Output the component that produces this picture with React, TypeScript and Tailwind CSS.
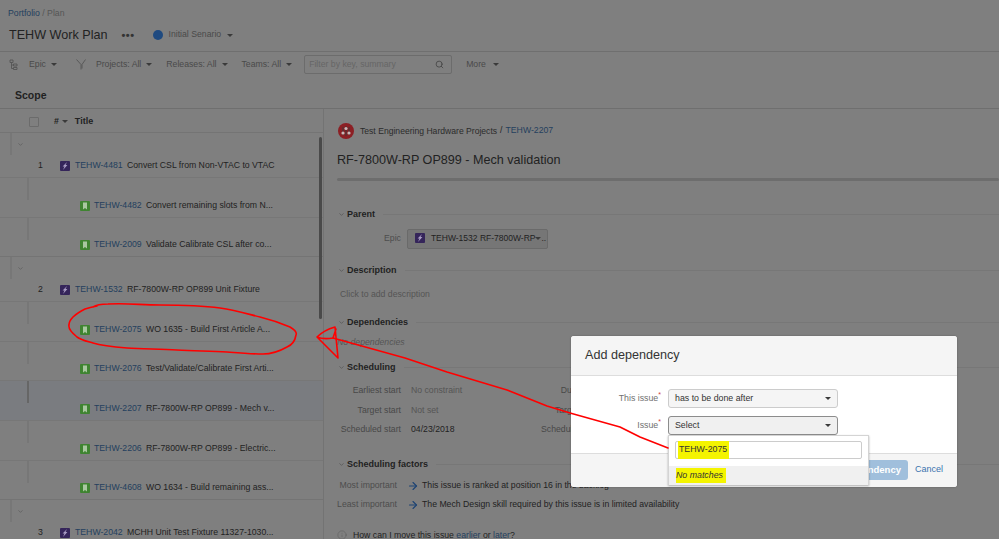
import { ArrowRight, ChevronDown, Info, Search } from 'lucide-react';

const font = { fontFamily: '"Liberation Sans", Arial, sans-serif' };

const topRows = [
  {
    num: 1,
    issueKey: 'TEHW-4481',
    title: 'Convert CSL from Non-VTAC to VTAC',
    children: [
      { issueKey: 'TEHW-4482', title: 'Convert remaining slots from N...' },
      { issueKey: 'TEHW-2009', title: 'Validate Calibrate CSL after co...' },
    ],
  },
  {
    num: 2,
    issueKey: 'TEHW-1532',
    title: 'RF-7800W-RP OP899 Unit Fixture',
    children: [
      { issueKey: 'TEHW-2075', title: 'WO 1635 - Build First Article A...' },
      { issueKey: 'TEHW-2076', title: 'Test/Validate/Calibrate First Arti...' },
      { issueKey: 'TEHW-2207', title: 'RF-7800W-RP OP899 - Mech v...', active: true },
      { issueKey: 'TEHW-2206', title: 'RF-7800W-RP OP899 - Electric...' },
      { issueKey: 'TEHW-4608', title: 'WO 1634 - Build remaining ass...' },
    ],
  },
  {
    num: 3,
    issueKey: 'TEHW-2042',
    title: 'MCHH Unit Test Fixture 11327-1030...',
    children: [],
  },
];

function Caret({ color = 'border-t-[#3a3a3a]' }: { color?: string }) {
  return <span className={`inline-block h-0 w-0 shrink-0 border-x-[3px] border-t-[3px] border-x-transparent ${color}`} />;
}

function EpicIcon() {
  return (
    <svg width="10" height="10" viewBox="0 0 10 10" className="mb-[1px] shrink-0">
      <rect width="10" height="10" rx="1" fill="#35255a" />
      <path d="M7 1 2.600 5.600h1.900L3 9l4.400-4.900H5.500z" fill="#a99cc4" />
    </svg>
  );
}

function StoryIcon() {
  return (
    <svg width="10" height="10" viewBox="0 0 10 10" className="mb-[1px] shrink-0">
      <rect width="10" height="10" rx="1" fill="#3f8431" />
      <path d="M3 1.500h4v7L5 7 3 8.500z" fill="#a9c7a0" />
    </svg>
  );
}

function TopRow({ num, issueKey, title }: { num: number; issueKey: string; title: string }) {
  return (
    <div className="relative flex h-[45px] items-end border-t border-[#747474] pb-[5px]">
      <div className="absolute left-[10px] top-0 h-[22px] w-[2px] bg-[#777777]" />
      <ChevronDown size={7} className="absolute left-[17px] top-[8px] text-[#555555]" />
      <span className="w-[60px] pl-[38px] text-[#222222]">{num}</span>
      <EpicIcon />
      <span className="ml-[5px] w-[52px] text-[#24405e]">{issueKey}</span>
      <span className="text-[#222222]">{title}</span>
    </div>
  );
}

function ChildRow({ issueKey, title, active }: { issueKey: string; title: string; active?: boolean }) {
  return (
    <div className={`relative flex h-[39.6px] items-end border-t border-[#777777] pb-[5px] pl-[80px] ${active ? 'bg-[#7a7c80]' : ''}`}>
      <div className={`absolute left-[27px] top-0 h-[22px] w-[2px] ${active ? 'bg-[#666666]' : 'bg-[#777777]'}`} />
      <StoryIcon />
      <span className="ml-[4px] w-[52px] text-[#24405e]">{issueKey}</span>
      <span className="text-[#222222]">{title}</span>
    </div>
  );
}

function SectionTitle({ label, className }: { label: string; className: string }) {
  return (
    <div className={`flex items-center gap-[2px] ${className}`}>
      <ChevronDown size={7} className="ml-[1px] text-[#4a4a4a]" />
      <span className="text-[9px] font-bold text-[#1f1f1f]">{label}</span>
      <div className="ml-[6px] h-px flex-1 bg-[#777777]" />
    </div>
  );
}

function DetailRow({ label, value, dark, label2 }: { label: string; value: string; dark?: boolean; label2: string }) {
  return (
    <div className="flex h-[19.5px] items-center">
      <span className="w-[64px] whitespace-nowrap text-right text-[#484848]">{label}</span>
      <span className={`ml-[10px] w-[130px] ${dark ? 'text-[#1f1f1f]' : 'text-[#555555]'}`}>{value}</span>
      <span className="w-[55px] whitespace-nowrap text-right text-[#484848]">{label2}</span>
    </div>
  );
}

function Factor({ label, text }: { label: string; text: string }) {
  return (
    <div className="flex h-[19px] items-center">
      <span className="w-[60px] whitespace-nowrap text-right text-[#4d4d4d]">{label}</span>
      <ArrowRight size={12} className="ml-[10px] text-[#1d4474]" strokeWidth={2.2} />
      <span className="ml-[3px] text-[#222222]">{text}</span>
    </div>
  );
}

function Dialog() {
  return (
    <div className="absolute left-[571px] top-[336px] flex h-[151px] w-[386px] flex-col rounded-[3px] bg-white text-[8.8px] shadow-[0_0_2px_rgba(0,0,0,0.3)]">
      <div className="flex h-[40px] items-center rounded-t-[3px] border-b border-[#dddddd] bg-[#f5f5f5] pl-[14px] text-[12.6px] text-[#333333]">
        Add dependency
      </div>
      <div className="flex flex-1 flex-col gap-[8px] pt-[13px]">
        <div className="flex items-center">
          <span className="w-[90px] text-right text-[#707070]">
            This issue<sup className="text-[7px] text-[#d04437]">*</sup>
          </span>
          <div className="ml-[7px] flex h-[19px] w-[170px] items-center justify-between rounded-[3px] border border-[#cccccc] bg-[#f5f5f5] px-[6px] text-[#333333]">
            has to be done after
            <Caret />
          </div>
        </div>
        <div className="flex items-center">
          <span className="w-[90px] text-right text-[#707070]">
            Issue<sup className="text-[7px] text-[#d04437]">*</sup>
          </span>
          <div className="ml-[7px] flex h-[19px] w-[170px] items-center justify-between rounded-[3px] border border-[#8c8c8c] bg-[#f0f0f0] px-[6px] text-[#333333]">
            Select
            <Caret />
          </div>
        </div>
      </div>
      <div className="flex h-[34px] items-center justify-end gap-[7px] rounded-b-[3px] border-t border-[#dddddd] bg-[#f5f5f5] pb-[1px] pr-[14px]">
        <div className="flex h-[20px] w-[100px] items-center justify-end rounded-[3px] bg-[#a0bfdc] pr-[7px] text-[9.5px] font-bold text-white">
          Add dependency
        </div>
        <span className="text-[9px] text-[#3b73af]">Cancel</span>
      </div>
      {/* select dropdown */}
      <div className="absolute left-[97px] top-[99px] h-[50px] w-[201px] border border-[#d4d4d4] bg-white shadow-[0_1px_2px_rgba(0,0,0,0.3)]">
        <div className="mx-[6px] mt-[5px] flex h-[18px] items-center rounded-[2px] border border-[#cccccc] pl-[2px] text-[#333333]">
          <span className="bg-[#f4f400] py-[2px] pl-[1px] pr-[2px]">TEHW-2075</span>
        </div>
        <div className="mt-[7px] flex h-[19px] items-center bg-[#f0f0f0] pl-[7px] italic text-[#333333]">
          <span className="bg-[#f4f400] py-[1px] pr-[3px]">No matches</span>
        </div>
      </div>
    </div>
  );
}

function Annotation() {
  return (
    <svg className="pointer-events-none absolute left-0 top-0" width="999" height="539" fill="none" stroke="#ff0000" strokeWidth="1.6" strokeLinejoin="round" strokeLinecap="round">
      <path d="M93 307C96 305 100 304 108 304C130 303 140 305 160 305C185 305 205 306 220 308C235 310 248 314 260 317C272 320 283 324 290 327C295 330 297 333 296 335C295 341 292 345 287 347C280 351 272 354 263 354C252 354 240 353 227 352C210 351 195 351 177 350C160 349 143 349 127 348C115 347 103 346 93 343C86 341 81 340 77 337C72 333 68 329 69 325C69 321 71 319 73 317C77 313 81 311 85 309C88 308 92 307 97 306" />
      <path d="M317 337C322 332 328 329 335 327C336 337 337 348 338 358C331 351 324 344 317 337C322 339 327 339 333 338L336 329" />
      <path d="M333 338L405 358L447 372L507 390L547 406L570 413L620 427L640 437L668 448" />
    </svg>
  );
}

export default function App() {
  return (
    <div style={font} className="relative h-[539px] w-[999px] overflow-hidden bg-[#7f7f7f] text-[8.7px] text-[#222222]">
      <header className="h-[52px] border-b border-[#6f6f6f] pl-[8px] pt-[8px]">
        <div className="text-[8.7px] leading-[10px] text-[#555555]">
          <span className="text-[#24405e]">Portfolio</span> / Plan
        </div>
        <div className="mt-[8px] flex items-center">
          <span className="pl-px text-[12.6px] leading-[18px] text-[#222222]">TEHW Work Plan</span>
          <span className="ml-[14px] text-[11px] font-bold leading-[10px] tracking-[0.5px] text-[#333333]">•••</span>
          <span className="ml-[18px] h-[10px] w-[10px] rounded-full bg-[#1f4a80]" />
          <span className="ml-[6px] text-[#4a4a4a]">Initial Senario</span>
          <span className="ml-[6px] flex"><Caret /></span>
        </div>
      </header>

      <div className="flex h-[25px] items-center text-[#4a4a4a]">
        <svg width="9" height="11" viewBox="0 0 9 11" className="ml-[9px]" fill="none" stroke="#555555" strokeWidth="0.9">
          <path d="M1 1h3v2.500H1zM4.500 5h3.500v2H4.500zM4.500 8.500h3.500v2h-3.500zM2.500 3.500v6h2M2.500 6h2" />
        </svg>
        <span className="ml-[11px]">Epic</span>
        <span className="ml-[5px] flex"><Caret /></span>
        <svg width="10" height="11" viewBox="0 0 10 11" className="ml-[19px]" fill="none" stroke="#555555" strokeWidth="0.9">
          <path d="M0.500 0.500 5 5.500v5M9.500 0.500 6 5.500v4" />
        </svg>
        <span className="ml-[10px]">Projects: All</span>
        <span className="ml-[5px] flex"><Caret /></span>
        <span className="ml-[14px]">Releases: All</span>
        <span className="ml-[5px] flex"><Caret /></span>
        <span className="ml-[14px]">Teams: All</span>
        <span className="ml-[5px] flex"><Caret /></span>
        <div className="ml-[12px] flex h-[19px] w-[148px] items-center justify-between rounded-[2px] border border-[#6c6c6c] pl-[4px] pr-[7px] text-[#666666]">
          Filter by key, summary
          <Search size={9} className="text-[#3f3f3f]" strokeWidth={2} />
        </div>
        <span className="ml-[14px]">More</span>
        <span className="ml-[7px] flex"><Caret /></span>
      </div>

      <div className="flex h-[32px] items-end border-b border-[#6f6f6f] pb-[6px] pl-[15px] text-[10.5px] font-bold leading-[13px] text-[#222222]">
        Scope
      </div>

      <div className="flex">
        <div className="relative h-[440px] w-[324px] shrink-0 border-r border-[#737373]">
          <div className="flex h-[23px] items-center pt-[2px]">
            <span className="ml-[29px] h-[10px] w-[10px] rounded-[1px] border border-[#6b6b6b]" />
            <span className="ml-[15px] font-bold text-[#222222]">#</span>
            <span className="ml-[3px] flex"><Caret /></span>
            <span className="ml-[7px] text-[9px] font-bold text-[#222222]">Title</span>
          </div>
          {topRows.map((row) => (
            <div key={row.issueKey}>
              <TopRow num={row.num} issueKey={row.issueKey} title={row.title} />
              {row.children.map((child) => (
                <ChildRow key={child.issueKey} {...child} />
              ))}
            </div>
          ))}
          <div className="absolute left-[319px] top-[28px] h-[182px] w-[3px] rounded-full bg-[#4a4a4a]" />
        </div>

        <main className="flex-1 pl-[13px] pt-[14px]">
          <div className="flex items-center">
            <svg width="16" height="16" viewBox="0 0 16 16" className="ml-[1px]">
              <circle cx="8" cy="8" r="8" fill="#8c1f24" />
              <path d="M5 4v8M8 3v10M11 4v8" stroke="#3a3a3a" strokeWidth="1" />
              <circle cx="5" cy="10" r="1.600" fill="#c9b8b8" />
              <circle cx="8" cy="5.500" r="1.600" fill="#c9b8b8" />
              <circle cx="11" cy="10" r="1.600" fill="#c9b8b8" />
            </svg>
            <span className="ml-[6px] text-[8.6px] text-[#2b2b2b]">Test Engineering Hardware Projects</span>
            <span className="mx-[3px]">/</span>
            <span className="text-[#24405e]">TEHW-2207</span>
          </div>
          <h1 className="mt-[13px] text-[12.6px] font-normal leading-[17px] text-[#222222]">RF-7800W-RP OP899 - Mech validation</h1>
          <div className="mt-[9px] h-[3px] rounded-full bg-[#6d6d6d]" />

          <SectionTitle label="Parent" className="mt-[27px]" />
          <div className="mt-[7px] flex items-center">
            <span className="ml-[47px] text-[#4d4d4d]">Epic</span>
            <div className="ml-[6px] flex h-[20px] w-[141px] items-center overflow-hidden whitespace-nowrap rounded-[2px] border border-[#6a6a6a] bg-[#767676] pl-[7px] text-[8.5px] text-[#222222]">
              <EpicIcon />
              <span className="ml-[6px] shrink-0">TEHW-1532 RF-7800W-RP</span>
              <Caret />
              <span>..</span>
            </div>
          </div>
          <SectionTitle label="Description" className="mt-[15px]" />
          <div className="mt-[11px] pl-[3px] text-[#555555]">Click to add description</div>
          <SectionTitle label="Dependencies" className="mt-[15px]" />
          <div className="mt-[6px] italic text-[#555555]">No dependencies</div>
          <SectionTitle label="Scheduling" className="mt-[12px]" />
          <div className="mt-[7px]">
            <DetailRow label="Earliest start" value="No constraint" label2="Due date" />
            <DetailRow label="Target start" value="Not set" label2="Target end" />
            <DetailRow label="Scheduled start" value="04/23/2018" dark label2="Scheduled end" />
          </div>
          <SectionTitle label="Scheduling factors" className="mt-[18px]" />
          <div className="mt-[5px]">
            <Factor label="Most important" text="This issue is ranked at position 16 in the backlog" />
            <Factor label="Least important" text="The Mech Design skill required by this issue is in limited availability" />
          </div>
          <div className="mt-[16px] flex items-center leading-[9px]">
            <Info size={10} className="text-[#5a5a5a]" strokeWidth={1.2} />
            <span className="ml-[6px]">
              How can I move this issue <span className="text-[#24405e]">earlier</span> or <span className="text-[#24405e]">later</span>?
            </span>
          </div>
        </main>
      </div>

      <Dialog />
      <Annotation />
    </div>
  );
}
